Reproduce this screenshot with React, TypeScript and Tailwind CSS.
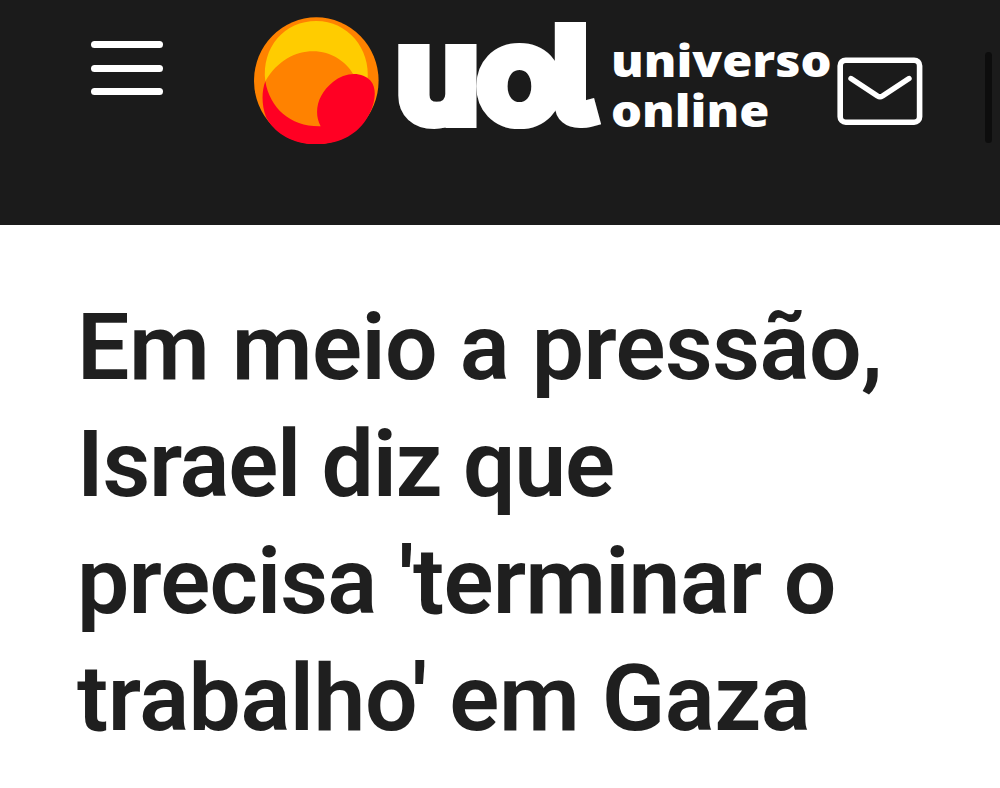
const headline = [
    { text: "Em meio a pressão,", spacing: "tracking-[-0.55px]" },
    { text: "Israel diz que", spacing: "tracking-[-1.3px]" },
    { text: "precisa 'terminar o", spacing: "tracking-[-0.85px]" },
    { text: "trabalho' em Gaza", spacing: "tracking-[-0.5px]" },
];

function MenuButton() {
    return (
        <button aria-label="Menu" className="mt-[41px] ml-[91px] flex h-[54px] w-[72px] flex-col justify-between">
            <span className="h-[7px] w-full rounded-full bg-white" />
            <span className="h-[7px] w-full rounded-full bg-white" />
            <span className="h-[7px] w-full rounded-full bg-white" />
        </button>
    );
}

function Globe() {
    return (
        <svg viewBox="28 35 374 383" className="mt-[16.5px] ml-[91px] h-[127.6px] w-[124.6px] shrink-0">
            <ellipse cx="215" cy="226.5" rx="187" ry="190.5" fill="#ff8200" />
            <path
                d="M62 228C50 125 120 47 215 47C310 47 378 130 369 225L325 205C305 170 260 138 205 138C152 138 98 166 62 228Z"
                fill="#ffcc00"
            />
            <path
                d="M228 363C205 320 220 265 265 230C301 199 353 198 378 226C398 250 392 290 375 325C345 385 290 417 215 417C145 417 90 385 64 335C50 300 51 256 62 228C76 310 138 365 228 363Z"
                fill="#ff0023"
            />
        </svg>
    );
}

function Wordmark() {
    return (
        <svg viewBox="0 0 208 112" className="mt-[20px] ml-[17px] h-[112px] w-[208px] shrink-0 overflow-visible">
            <text
                transform="scale(1.12 1)"
                y="97.5"
                x="2.2 75.2 142"
                fill="#fff"
                stroke="#fff"
                strokeWidth="20"
                fontSize="118"
                fontWeight="300"
                fontFamily="Inter, sans-serif"
                style={{ fontFeatureSettings: '"cv05" 1' }}
            >
                uol
            </text>
        </svg>
    );
}

function MailButton() {
    return (
        <button aria-label="E-mail" className="mt-[57px] ml-[6px] h-[68px] w-[86px] shrink-0">
            <svg viewBox="0 0 86 68" fill="none" stroke="#fff" strokeLinecap="round" strokeLinejoin="round">
                <rect x="3.2" y="3.2" width="79.4" height="62" rx="5.5" strokeWidth="5.6" />
                <path d="M14 21.5L40.5 39Q43 40.5 45.5 39L72 21.5" strokeWidth="5.4" />
            </svg>
        </button>
    );
}

export default function App() {
    return (
        <div className="h-[788px] w-[1000px] overflow-hidden bg-white">
            <header className="flex h-[225px] items-start bg-[#1b1b1b]">
                <MenuButton />
                <Globe />
                <Wordmark />
                <div className="mt-[35px] ml-[7px] w-[220px] origin-left scale-x-[1.085] font-['Noto_Sans',sans-serif] text-[45px] leading-[50px] font-black whitespace-nowrap text-white">
                    <p>universo</p>
                    <p>online</p>
                </div>
                <MailButton />
                <div className="mt-[52px] ml-auto mr-[8px] h-[91px] w-[7px] shrink-0 rounded-full bg-[#0d0d0d]" />
            </header>
            <main className="pt-[64px] pl-[77px]">
                <h1 className="font-[Roboto,sans-serif] text-[93px] leading-[117px] font-semibold whitespace-nowrap text-[#1f1f1f]">
                    {headline.map((line) => (
                        <span key={line.text} className={`block ${line.spacing}`}>
                            {line.text}
                        </span>
                    ))}
                </h1>
            </main>
        </div>
    );
}
